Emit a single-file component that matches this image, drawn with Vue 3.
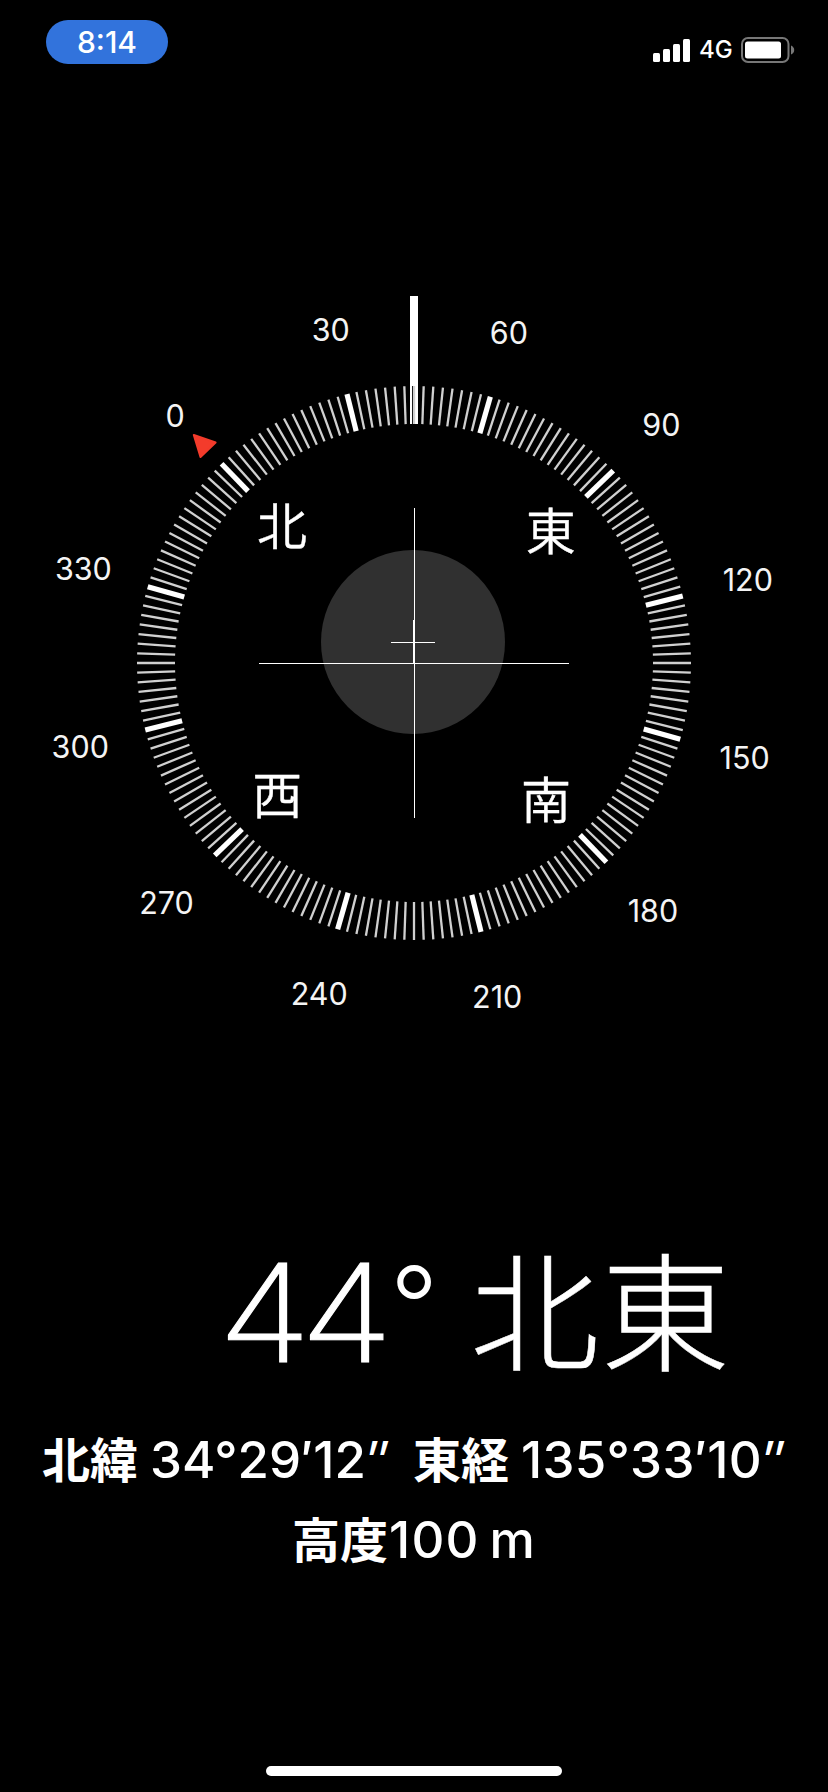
<template>
  <div class="compass-app">
    <header class="status-bar">
      <div class="time-pill">8:14</div>
      <div class="status-icons">
        <svg class="signal" width="37" height="24" viewBox="0 0 37 24">
          <rect x="0" y="15" width="7" height="9" rx="1.5" />
          <rect x="10" y="11" width="7" height="13" rx="1.5" />
          <rect x="20" y="6" width="7" height="18" rx="1.5" />
          <rect x="30" y="1" width="7" height="23" rx="1.5" />
        </svg>
        <span class="network">4G</span>
        <svg class="battery" width="54" height="26" viewBox="0 0 54 26">
          <rect class="battery-shell" x="1" y="1" width="46.5" height="24" rx="6" />
          <rect x="4" y="4.5" width="36" height="17" rx="2.5" />
          <path class="battery-cap" d="M50 8.5 Q53.2 10 53.2 13 Q53.2 16 50 17.5 Z" />
        </svg>
      </div>
    </header>

    <main class="dial-area">
      <svg class="dial" width="828" height="760" viewBox="-414 -383 828 760">
        <!-- Level bubble -->
        <circle class="bubble" cx="-1" cy="-21" r="92" />

        <!-- Heading pointer -->
        <rect class="pointer" x="-4" y="-367" width="8" height="128" />
        <rect class="pointer-gap" x="-2" y="-277" width="3" height="38" />

        <!-- Graduation -->
        <line
          v-for="tick in ticks"
          :key="tick.degree"
          :class="tick.major ? 'tick-major' : 'tick'"
          x1="0"
          y1="-277"
          x2="0"
          y2="-239"
          :transform="`rotate(${tick.degree - heading})`"
        />

        <path
          class="north-mark"
          d="M0 -317 L10.5 -296.5 L-10.5 -296.5 Z"
          :transform="`rotate(${-heading})`"
        />

        <!-- Degree numbers -->
        <text
          v-for="label in labels"
          :key="label.degree"
          class="degree"
          :x="label.x"
          :y="label.y + 11.6"
        >{{ label.degree }}</text>

        <!-- Cardinal directions -->
        <text
          v-for="item in cardinals"
          :key="item.name"
          class="cardinal"
          :x="item.x"
          :y="item.y + 19"
        >{{ item.name }}</text>

        <!-- Crosshairs -->
        <g class="cross">
          <rect x="0" y="-155" width="1" height="310" />
          <rect x="-155" y="0" width="310" height="1" />
          <rect x="-1" y="-43" width="1" height="44" />
          <rect x="-23" y="-21" width="44" height="1" />
        </g>
      </svg>
    </main>

    <section class="heading">
      <span class="heading-value">{{ heading }}</span>
      <span class="heading-unit">°</span>
      <span class="heading-name">北東</span>
    </section>

    <section class="location">
      <div class="row">
        <span class="kanji">北緯</span>
        <span class="coord">34°29′12<i>″</i></span>
        <span class="kanji east">東経</span>
        <span class="coord longitude">135°33′10<i>″</i></span>
      </div>
      <div class="row altitude">
        <span class="kanji">高度</span>
        <span class="meters">100 m</span>
      </div>
    </section>

    <footer class="home">
      <div class="home-bar"></div>
    </footer>
  </div>
</template>

<script setup>
import { ref, computed } from 'vue'

const heading = ref(44)

const polar = (degree, radius) => {
  const angle = ((degree - heading.value) * Math.PI) / 180
  return {
    x: Math.sin(angle) * radius,
    y: -Math.cos(angle) * radius
  }
}

const ticks = Array.from({ length: 180 }, (_, i) => ({
  degree: i * 2,
  major: (i * 2) % 30 === 0
}))

const labels = computed(() =>
  Array.from({ length: 12 }, (_, i) => ({ degree: i * 30, ...polar(i * 30, 344) }))
)

const cardinals = computed(() =>
  ['北', '東', '南', '西'].map((name, i) => ({ name, ...polar(i * 90, 190) }))
)
</script>

<style>
body {
  margin: 0;
  background: #000;
}
</style>

<style scoped>
.compass-app {
  display: flex;
  flex-direction: column;
  width: 828px;
  height: 1792px;
  overflow: hidden;
  background: #000;
  color: #fff;
  font-family: Inter, "Noto Sans CJK JP", sans-serif;
}

.status-bar {
  display: flex;
  justify-content: space-between;
  align-items: flex-start;
  height: 280px;
  padding: 20px 33px 0 46px;
  box-sizing: border-box;
}

.time-pill {
  width: 122px;
  height: 44px;
  border-radius: 22px;
  background: #3273dc;
  font-size: 30px;
  font-weight: 450;
  line-height: 45px;
  text-align: center;
}

.status-icons {
  display: flex;
  align-items: center;
  padding-top: 17px;
}

.signal,
.battery {
  display: block;
  fill: #fff;
}

.network {
  width: 33px;
  margin: 0 9px 0 9px;
  font-size: 24px;
  line-height: 26px;
  font-weight: 450;
}

.battery .battery-shell {
  fill: none;
  stroke: #777;
  stroke-width: 2;
}

.battery .battery-cap {
  fill: #777;
}

.dial-area {
  height: 760px;
}

.dial {
  display: block;
}

.bubble {
  fill: #303030;
}

.pointer {
  fill: #fff;
}

.pointer-gap {
  fill: #000;
}

.tick {
  stroke: #d0d0d0;
  stroke-width: 2.3;
}

.tick-major {
  stroke: #fff;
  stroke-width: 5.2;
}

.north-mark {
  fill: #f33b2b;
  stroke: #f33b2b;
  stroke-width: 2;
  stroke-linejoin: round;
}

.degree {
  fill: #f4f4f4;
  font-size: 30.5px;
  text-anchor: middle;
}

.cardinal {
  fill: #fff;
  stroke: #fff;
  stroke-width: 0.4;
  font-family: "Noto Sans CJK JP", sans-serif;
  font-size: 50px;
  font-weight: 350;
  text-anchor: middle;
}

.cross {
  fill: #fff;
  shape-rendering: crispEdges;
}

.heading {
  display: flex;
  align-items: baseline;
  height: 190px;
  margin-top: 171px;
  padding-left: 218px;
  line-height: 190px;
  white-space: nowrap;
}

.heading-value {
  width: 172px;
  font-size: 136px;
  font-weight: 250;
  letter-spacing: -10px;
  transform: scaleX(1.12);
  transform-origin: left;
  -webkit-text-stroke: 1px #fff;
}

.heading-unit {
  position: relative;
  top: -19px;
  width: 80px;
  font-size: 106px;
  font-weight: 300;
  line-height: 1;
}

.heading-name {
  font-family: "Noto Sans CJK JP", sans-serif;
  font-size: 129px;
  font-weight: 250;
  letter-spacing: 2px;
  -webkit-text-stroke: 0.5px #fff;
}

.location {
  margin-top: 16px;
  font-size: 51px;
  font-weight: 500;
}

.row {
  display: flex;
  align-items: baseline;
  height: 80px;
  padding-left: 42px;
  line-height: 80px;
  white-space: nowrap;
}

.coord i {
  display: inline-block;
  font-weight: 600;
  transform: scaleX(0.82);
  transform-origin: left;
}

.longitude {
  letter-spacing: 0.3px;
}

.kanji {
  margin-right: 12px;
  font-family: "Noto Sans CJK JP", sans-serif;
  font-size: 48px;
  font-weight: 700;
}

.east {
  margin-left: 21px;
}

.altitude {
  padding-left: 292px;
}

.altitude .kanji {
  margin-right: 1px;
}

.meters {
  letter-spacing: 1.2px;
  word-spacing: -5px;
}

.home {
  display: flex;
  justify-content: center;
  margin-top: auto;
  padding-bottom: 16px;
}

.home-bar {
  width: 296px;
  height: 10px;
  border-radius: 5px;
  background: #fff;
}
</style>
